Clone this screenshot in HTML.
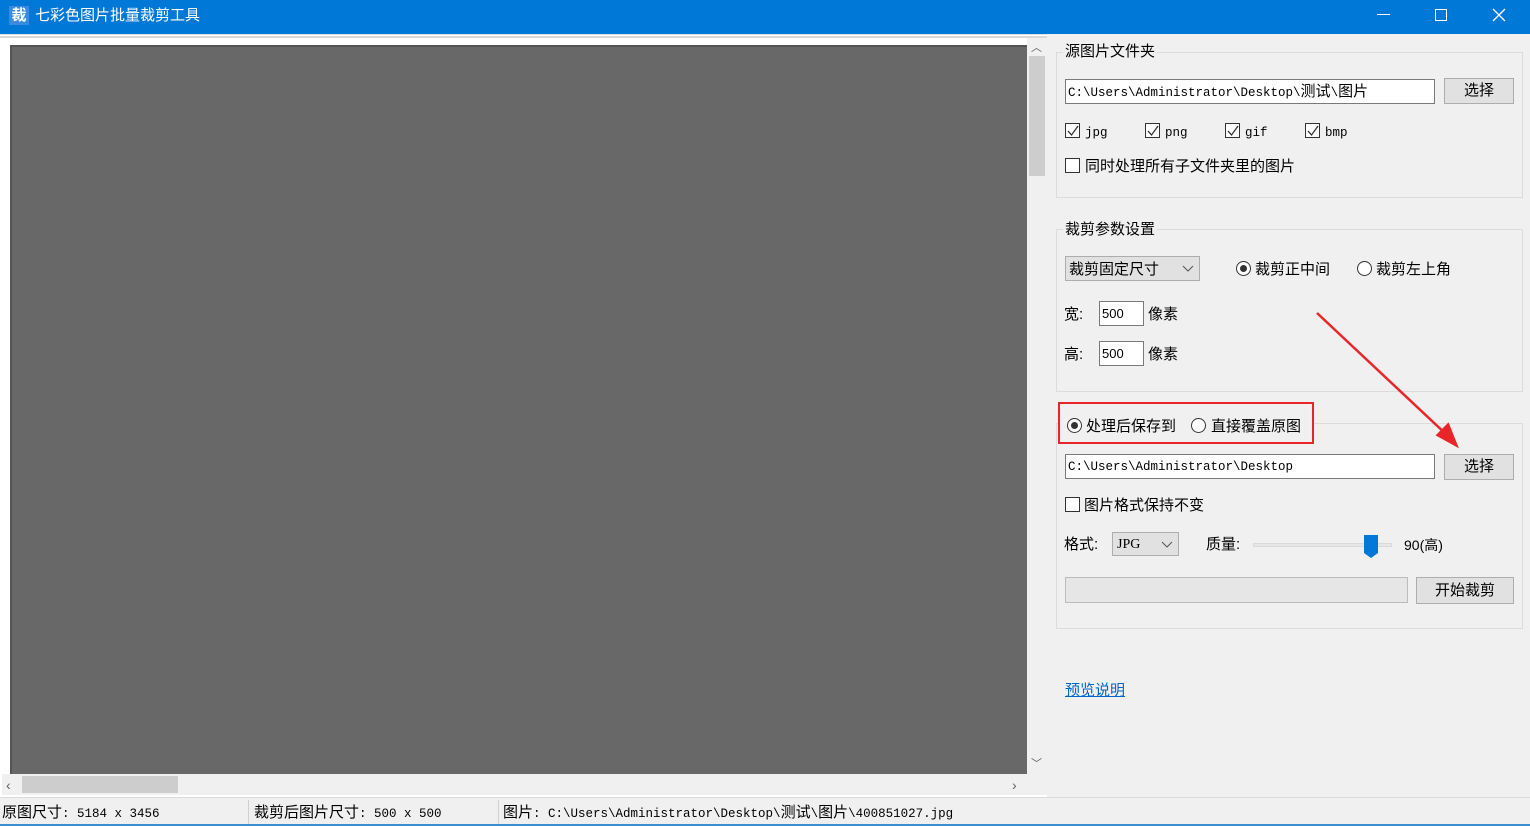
<!DOCTYPE html>
<html><head><meta charset="utf-8"><style>
*{margin:0;padding:0;box-sizing:border-box}
body{width:1530px;height:826px;overflow:hidden;background:#f0f0f0;position:relative;font-family:"Liberation Sans","Microsoft YaHei","Noto Sans CJK SC",sans-serif;font-size:15px;color:#000}
.a{position:absolute}
.t{position:absolute;white-space:nowrap;line-height:18px;margin-top:1px}
.mono{font-family:"Liberation Mono","Noto Sans CJK SC",monospace;font-size:12.5px}
.grp{position:absolute;border:1px solid #dcdcdc}
.inp{position:absolute;background:#fff;border:1px solid #7a7a7a}
.btn{position:absolute;background:#e1e1e1;border:1px solid #adadad;text-align:center}
.cb{position:absolute;width:15px;height:15px;border:1px solid #333;background:#fff}
.rd{position:absolute;width:15px;height:15px;border:1px solid #333;border-radius:50%;background:#fff}
.rd.on::after{content:"";position:absolute;left:3px;top:3px;width:7px;height:7px;border-radius:50%;background:#333}
.chk{position:absolute;left:1px;top:1px}
</style></head><body>
<div class="a" style="left:0;top:0;width:1530px;height:34px;background:#0078d7"></div>
<div class="a" style="left:9px;top:6px;width:20px;height:19px;background:#3a8be0;color:#fff;font-size:15px;line-height:19px;text-align:center;font-weight:bold">裁</div>
<div class="t" style="left:35px;top:6px;color:#fff;font-size:15px">七彩色图片批量裁剪工具</div>
<div class="a" style="left:1377px;top:14px;width:13px;height:1px;background:#fff"></div>
<div class="a" style="left:1435px;top:9px;width:12px;height:12px;border:1px solid #fff"></div>
<svg class="a" style="left:1492px;top:8px" width="14" height="14"><path d="M1 1L13 13M13 1L1 13" stroke="#fff" stroke-width="1.3"/></svg>
<div class="a" style="left:0;top:34px;width:1047px;height:763px;background:#fff;border-top:1px solid #e0e0e0"></div>
<div class="a" style="left:0;top:36px;width:1047px;height:2px;background:#d8d8d8"></div>
<div class="a" style="left:10px;top:45px;width:1017px;height:729px;background:#686868;border-top:2px solid #555;border-left:2px solid #555"></div>
<div class="a" style="left:1027px;top:38px;width:20px;height:736px;background:#f0f0f0"></div>
<div class="a" style="left:1029px;top:56px;width:16px;height:120px;background:#cdcdcd"></div>
<div class="t" style="left:1031px;top:38px;font-size:11px;color:#606060">︿</div>
<div class="t" style="left:1031px;top:754px;font-size:11px;color:#606060">﹀</div>
<div class="a" style="left:2px;top:774px;width:1045px;height:21px;background:#f0f0f0"></div>
<div class="a" style="left:22px;top:776px;width:156px;height:17px;background:#cdcdcd"></div>
<div class="t" style="left:6px;top:775px;font-size:14px;color:#606060">‹</div>
<div class="t" style="left:1012px;top:775px;font-size:14px;color:#606060">›</div>
<div class="a" style="left:0;top:797px;width:1530px;height:1px;background:#dadada"></div>
<div class="a" style="left:248px;top:800px;width:1px;height:24px;background:#d0d0d0"></div>
<div class="a" style="left:498px;top:800px;width:1px;height:24px;background:#d0d0d0"></div>
<div class="t" style="left:2px;top:803px">原图尺寸<span class="mono">: 5184 x 3456</span></div>
<div class="t" style="left:254px;top:803px">裁剪后图片尺寸<span class="mono">: 500 x 500</span></div>
<div class="t" style="left:503px;top:803px">图片<span class="mono">: C:\Users\Administrator\Desktop\</span>测试<span class="mono">\</span>图片<span class="mono">\400851027.jpg</span></div>
<div class="a" style="left:0;top:824px;width:1530px;height:2px;background:#3b8fd0"></div>
<div class="grp" style="left:1056px;top:52px;width:467px;height:146px"></div>
<div class="t" style="left:1063px;top:42px;background:#f0f0f0;padding:0 2px">源图片文件夹</div>
<div class="inp" style="left:1065px;top:79px;width:370px;height:25px"></div>
<div class="t" style="left:1068px;top:82px"><span class="mono">C:\Users\Administrator\Desktop\</span>测试<span class="mono">\</span>图片</div>
<div class="btn" style="left:1444px;top:78px;width:70px;height:26px;line-height:24px">选择</div>
<div class="cb" style="left:1065px;top:123px"><svg class="chk" width="12" height="12"><path d="M1 6L4.5 10L11 1" stroke="#333" stroke-width="1.3" fill="none"/></svg></div><div class="t mono" style="left:1085px;top:123px">jpg</div>
<div class="cb" style="left:1145px;top:123px"><svg class="chk" width="12" height="12"><path d="M1 6L4.5 10L11 1" stroke="#333" stroke-width="1.3" fill="none"/></svg></div><div class="t mono" style="left:1165px;top:123px">png</div>
<div class="cb" style="left:1225px;top:123px"><svg class="chk" width="12" height="12"><path d="M1 6L4.5 10L11 1" stroke="#333" stroke-width="1.3" fill="none"/></svg></div><div class="t mono" style="left:1245px;top:123px">gif</div>
<div class="cb" style="left:1305px;top:123px"><svg class="chk" width="12" height="12"><path d="M1 6L4.5 10L11 1" stroke="#333" stroke-width="1.3" fill="none"/></svg></div><div class="t mono" style="left:1325px;top:123px">bmp</div>
<div class="cb" style="left:1065px;top:158px"></div><div class="t" style="left:1085px;top:157px">同时处理所有子文件夹里的图片</div>
<div class="grp" style="left:1056px;top:229px;width:467px;height:163px"></div>
<div class="t" style="left:1063px;top:220px;background:#f0f0f0;padding:0 2px">裁剪参数设置</div>
<div class="a" style="left:1065px;top:256px;width:135px;height:25px;background:#e1e1e1;border:1px solid #adadad"></div>
<div class="t" style="left:1069px;top:260px">裁剪固定尺寸</div>
<svg class="a" style="left:1182px;top:265px" width="12" height="8"><path d="M1 1L6 6L11 1" stroke="#555" fill="none"/></svg>
<div class="rd on" style="left:1236px;top:261px"></div><div class="t" style="left:1255px;top:260px">裁剪正中间</div>
<div class="rd" style="left:1357px;top:261px"></div><div class="t" style="left:1376px;top:260px">裁剪左上角</div>
<div class="t" style="left:1064px;top:305px">宽:</div>
<div class="inp" style="left:1099px;top:301px;width:45px;height:25px"></div><div class="t" style="left:1102px;top:304px;font-size:13px">500</div>
<div class="t" style="left:1148px;top:305px">像素</div>
<div class="t" style="left:1064px;top:345px">高:</div>
<div class="inp" style="left:1099px;top:341px;width:45px;height:25px"></div><div class="t" style="left:1102px;top:344px;font-size:13px">500</div>
<div class="t" style="left:1148px;top:345px">像素</div>
<div class="grp" style="left:1056px;top:423px;width:467px;height:206px"></div>
<div class="a" style="left:1058px;top:402px;width:256px;height:42px;background:#f0f0f0;border:2px solid #e8262a"></div>
<div class="rd on" style="left:1067px;top:418px"></div><div class="t" style="left:1086px;top:417px">处理后保存到</div>
<div class="rd" style="left:1191px;top:418px"></div><div class="t" style="left:1211px;top:417px">直接覆盖原图</div>
<div class="inp" style="left:1065px;top:454px;width:370px;height:25px"></div>
<div class="t mono" style="left:1068px;top:457px">C:\Users\Administrator\Desktop</div>
<div class="btn" style="left:1444px;top:454px;width:70px;height:26px;line-height:24px">选择</div>
<div class="cb" style="left:1065px;top:497px"></div><div class="t" style="left:1084px;top:496px">图片格式保持不变</div>
<div class="t" style="left:1064px;top:535px">格式:</div>
<div class="a" style="left:1112px;top:532px;width:67px;height:24px;background:#e1e1e1;border:1px solid #adadad"></div>
<div class="t" style="left:1117px;top:535px;font-family:'Liberation Serif',serif;font-size:14px">JPG</div>
<svg class="a" style="left:1161px;top:541px" width="12" height="8"><path d="M1 1L6 6L11 1" stroke="#555" fill="none"/></svg>
<div class="t" style="left:1206px;top:535px">质量:</div>
<div class="a" style="left:1253px;top:543px;width:139px;height:4px;background:#e7e7e7;border:1px solid #dadada"></div>
<svg class="a" style="left:1363px;top:534px" width="16" height="25"><path d="M1 1H15V19L8 24L1 19Z" fill="#0078d7"/></svg>
<div class="t" style="left:1404px;top:535px;font-size:14px">90(高)</div>
<div class="a" style="left:1065px;top:577px;width:343px;height:26px;background:#e6e6e6;border:1px solid #bcbcbc"></div>
<div class="btn" style="left:1416px;top:577px;width:98px;height:27px;line-height:25px">开始裁剪</div>
<div class="t" style="left:1065px;top:681px;color:#0066cc;text-decoration:underline">预览说明</div>
<svg class="a" style="left:1310px;top:308px" width="150" height="142"><path d="M7 5L138 128" stroke="#e8262a" stroke-width="2.5"/><path d="M146 137L128 127L138 117Z" fill="#e8262a" stroke="#e8262a" stroke-width="3"/></svg>
</body></html>
